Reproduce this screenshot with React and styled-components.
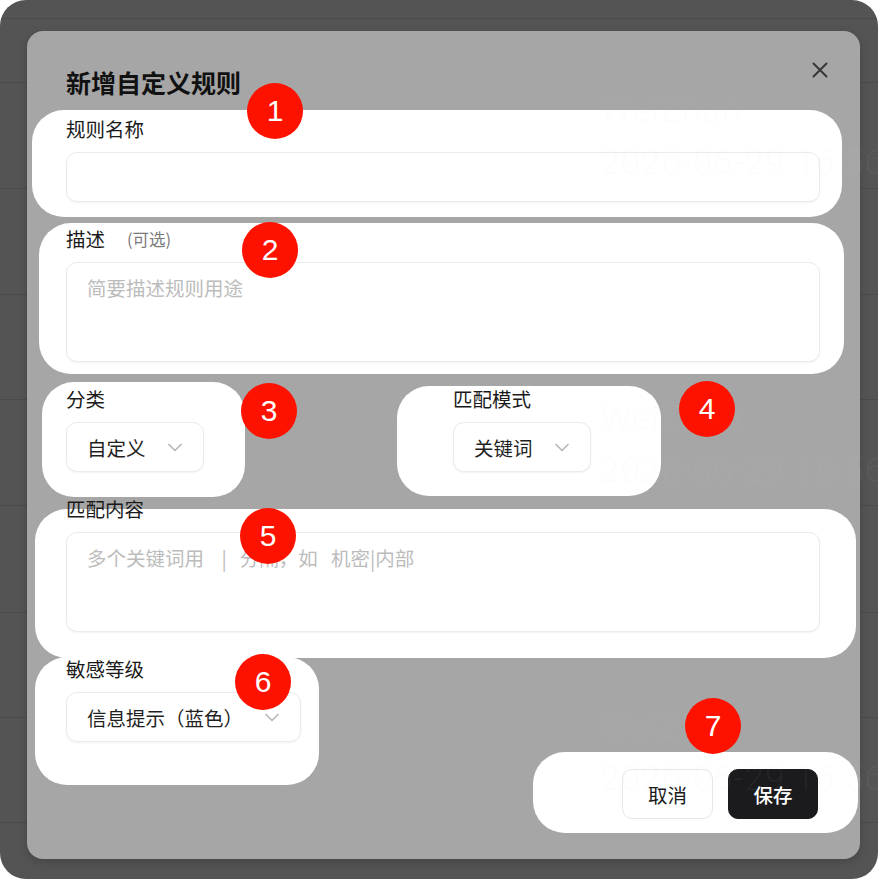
import React from 'react'
import styled, { createGlobalStyle } from 'styled-components'

const GlobalStyle = createGlobalStyle`
    html, body {
        margin: 0;
        padding: 0;
        background: #ffffff;
    }
    body {
        font-family: "Noto Sans CJK SC", "Noto Sans", sans-serif;
    }
    * {
        box-sizing: border-box;
    }
`

const Page = styled.div`
    position: relative;
    width: 878px;
    height: 879px;
    background-color: #545454;
    border-radius: 26px;
    overflow: hidden;
`

const Table = styled.div`
    display: flex;
    flex-direction: column;
`

const TableRow = styled.div`
    height: ${p => p.$h}px;
    border-bottom: 1px solid #4b4b4b;
`

const Watermark = styled.div`
    position: absolute;
    left: ${p => p.$x}px;
    top: ${p => p.$y}px;
    z-index: 2;
    pointer-events: none;
    display: flex;
    flex-direction: column;
    gap: 14px;
    font-family: Roboto, "Liberation Sans", sans-serif;
    font-weight: 300;
    font-size: 35px;
    line-height: 38px;
    letter-spacing: 1px;
    white-space: nowrap;
    color: rgba(210, 210, 210, 0.06);
`

const Modal = styled.div`
    position: absolute;
    left: 27px;
    top: 31px;
    width: 833px;
    height: 828px;
    background-color: #a6a6a6;
    border-radius: 16px;
    box-shadow: 0 3px 8px rgba(0, 0, 0, 0.18);
    padding: 34px 40px 0 39px;
`

const Highlight = styled.div`
    position: absolute;
    left: ${p => p.$x}px;
    top: ${p => p.$y}px;
    width: ${p => p.$w}px;
    height: ${p => p.$h}px;
    background-color: #ffffff;
    border-radius: 32px;
    z-index: 0;
`

const Badge = styled.div`
    position: absolute;
    left: ${p => p.$x}px;
    top: ${p => p.$y}px;
    width: 56px;
    height: 56px;
    border-radius: 50%;
    background-color: #fd1200;
    color: #ffffff;
    display: flex;
    align-items: center;
    justify-content: center;
    font-family: "Liberation Sans", Arial, sans-serif;
    font-size: 30px;
    z-index: 3;
`

const Content = styled.div`
    position: relative;
    z-index: 1;
    display: flex;
    flex-direction: column;
`

const Title = styled.h2`
    margin: 0 0 18px;
    font-size: 25px;
    line-height: 34px;
    font-weight: 700;
    color: #111111;
`

const CloseButton = styled.button`
    position: absolute;
    right: 26px;
    top: 25px;
    width: 28px;
    height: 28px;
    padding: 0;
    border: none;
    background: transparent;
    display: flex;
    align-items: center;
    justify-content: center;
    z-index: 1;
`

const Form = styled.div`
    display: flex;
    flex-direction: column;
    gap: 25px;
`

const Row = styled.div`
    display: grid;
    grid-template-columns: 1fr 1fr;
    gap: 20px;
`

const Field = styled.div`
    display: flex;
    flex-direction: column;
    align-items: flex-start;
    gap: 11px;
`

const Label = styled.div`
    display: flex;
    align-items: center;
    gap: 22px;
    height: 24px;
    font-size: 19.5px;
    line-height: 24px;
    color: #1a1a1a;
`

const Hint = styled.span`
    font-size: 16.5px;
    line-height: 24px;
    color: #7a7a7a;
`

const Input = styled.input`
    width: 100%;
    height: 50px;
    border: 1px solid #ebebeb;
    border-radius: 11px;
    background: #ffffff;
    box-shadow: 0 1px 2px rgba(0, 0, 0, 0.05);
    padding: 0 20px;
    font: inherit;
    font-size: 19.5px;
    outline: none;
`

const TextArea = styled.textarea`
    display: block;
    width: 100%;
    height: 100px;
    border: 1px solid #ebebeb;
    border-radius: 11px;
    background: #ffffff;
    box-shadow: 0 1px 2px rgba(0, 0, 0, 0.05);
    padding: 13px 20px;
    font-family: "Noto Sans CJK SC", "Noto Sans", sans-serif;
    font-size: 19.5px;
    line-height: 24px;
    resize: none;
    outline: none;
    &::placeholder {
        color: #bcbcbc;
    }
`

const Select = styled.div`
    height: 50px;
    display: inline-flex;
    align-items: center;
    gap: 22px;
    padding: 0 21px 0 20px;
    border: 1px solid #ebebeb;
    border-radius: 11px;
    background: #ffffff;
    box-shadow: 0 1px 2px rgba(0, 0, 0, 0.05);
    font-size: 19.5px;
    color: #1f1f1f;
`

const Footer = styled.div`
    display: flex;
    justify-content: flex-end;
    gap: 15px;
    margin: 27px 2px 0 0;
`

const Button = styled.button`
    width: ${p => p.$w}px;
    height: 50px;
    border-radius: 10px;
    border: 1px solid ${p => (p.$primary ? '#1b1b1d' : '#e6e6e6')};
    background-color: ${p => (p.$primary ? '#1b1b1d' : '#ffffff')};
    color: ${p => (p.$primary ? '#ffffff' : '#1a1a1a')};
    font-family: "Noto Sans CJK SC", "Noto Sans", sans-serif;
    font-size: 19.5px;
    font-weight: ${p => (p.$primary ? 500 : 400)};
`

const Chevron = () => (
    <svg width="14" height="9" viewBox="0 0 14 9" fill="none">
        <polyline points="1,1.5 7,7.5 13,1.5" stroke="#b8b8b8" strokeWidth="1.7" strokeLinecap="round" strokeLinejoin="round" />
    </svg>
)

const CloseIcon = () => (
    <svg width="16" height="16" viewBox="0 0 16 16" fill="none">
        <path d="M1.5 1.5 L14.5 14.5 M14.5 1.5 L1.5 14.5" stroke="#383838" strokeWidth="2" strokeLinecap="round" />
    </svg>
)

const rows = [19, 64, 106, 106, 105, 106, 107, 105, 105]

const highlights = [
    { x: 5, y: 79, w: 810, h: 107 },
    { x: 12, y: 192, w: 805, h: 151 },
    { x: 15, y: 351, w: 203, h: 115 },
    { x: 370, y: 355, w: 264, h: 110 },
    { x: 8, y: 478, w: 821, h: 149 },
    { x: 8, y: 626, w: 284, h: 128 },
    { x: 506, y: 721, w: 325, h: 81 },
]

const badges = [
    { n: 1, x: 220, y: 52 },
    { n: 2, x: 215, y: 191 },
    { n: 3, x: 214, y: 352 },
    { n: 4, x: 652, y: 350 },
    { n: 5, x: 213, y: 477 },
    { n: 6, x: 208, y: 623 },
    { n: 7, x: 658, y: 667 },
]

const marks = [
    { x: 600, y: 92 },
    { x: 600, y: 400 },
    { x: 600, y: 708 },
]

const App = () => {
    return (
        <>
            <GlobalStyle />
            <Page>
                <Table>
                    {rows.map((h, i) => <TableRow key={i} $h={h} />)}
                </Table>

                <Modal>
                    {highlights.map((b, i) => (
                        <Highlight key={i} $x={b.x} $y={b.y} $w={b.w} $h={b.h} />
                    ))}

                    <CloseButton><CloseIcon /></CloseButton>

                    <Content>
                        <Title>新增自定义规则</Title>
                        <Form>
                            <Field>
                                <Label>规则名称</Label>
                                <Input />
                            </Field>
                            <Field>
                                <Label>描述<Hint>(可选)</Hint></Label>
                                <TextArea placeholder="简要描述规则用途" />
                            </Field>
                            <Row>
                                <Field>
                                    <Label>分类</Label>
                                    <Select>自定义<Chevron /></Select>
                                </Field>
                                <Field>
                                    <Label>匹配模式</Label>
                                    <Select>关键词<Chevron /></Select>
                                </Field>
                            </Row>
                            <Field>
                                <Label>匹配内容</Label>
                                <TextArea placeholder="多个关键词用    |   分隔，如   机密|内部" />
                            </Field>
                            <Field>
                                <Label>敏感等级</Label>
                                <Select>信息提示（蓝色）<Chevron /></Select>
                            </Field>
                        </Form>
                        <Footer>
                            <Button $w={91}>取消</Button>
                            <Button $w={90} $primary>保存</Button>
                        </Footer>
                    </Content>

                    {badges.map(b => (
                        <Badge key={b.n} $x={b.x} $y={b.y}>{b.n}</Badge>
                    ))}
                </Modal>

                {marks.map((m, i) => (
                    <Watermark key={i} $x={m.x} $y={m.y}>
                        <span>WeiZhan</span>
                        <span>2026-06-29 16:56:27</span>
                    </Watermark>
                ))}
            </Page>
        </>
    )
}

export default App
